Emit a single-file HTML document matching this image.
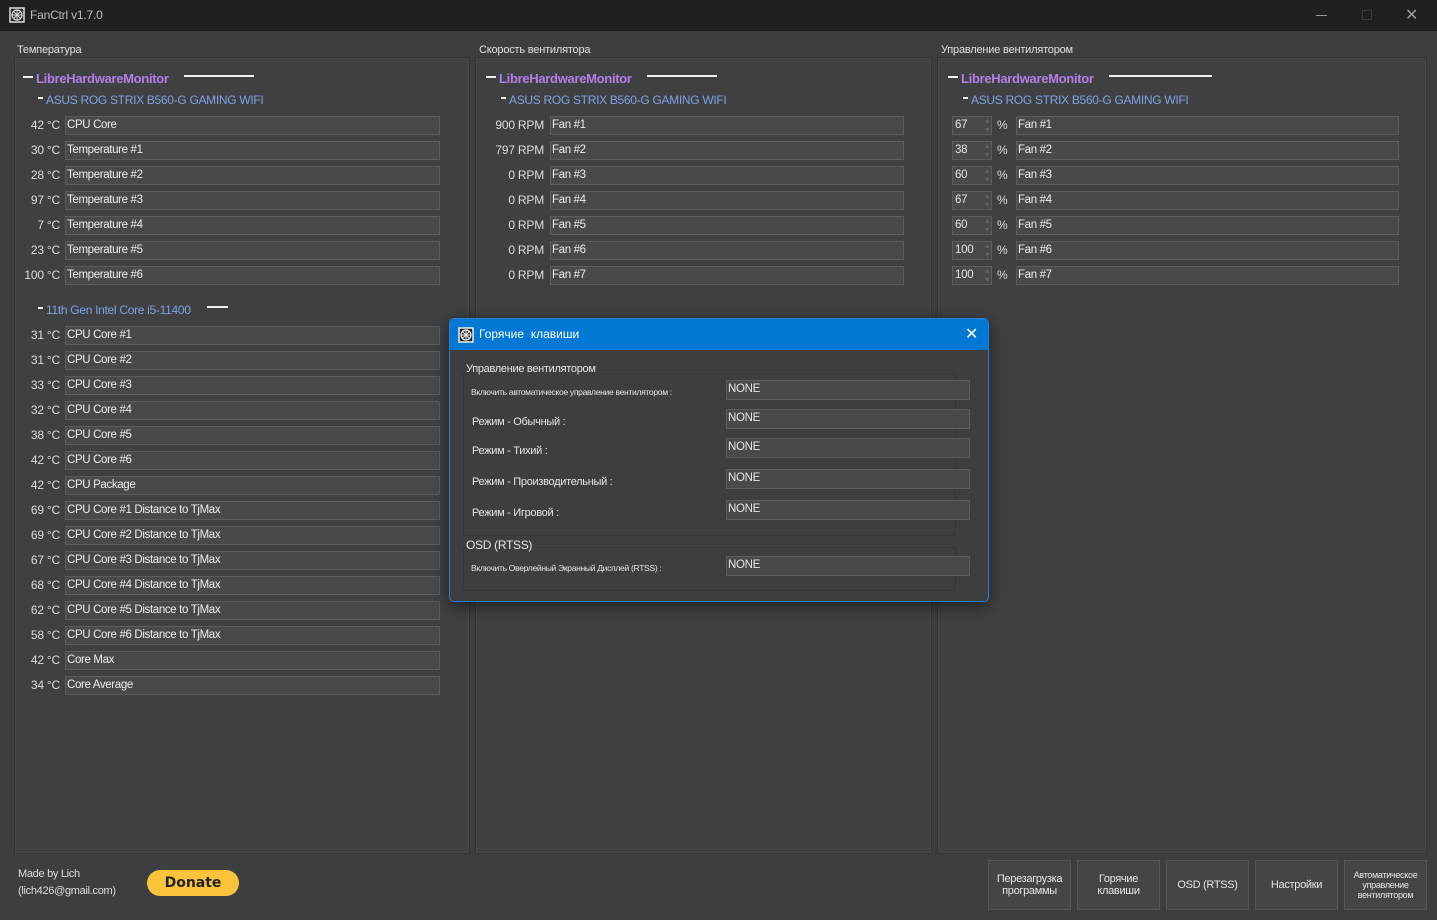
<!DOCTYPE html>
<html><head><meta charset="utf-8"><style>
*{margin:0;padding:0;box-sizing:border-box}
body{width:1437px;height:920px;background:#3d3e40;font-family:"Liberation Sans","Noto Sans CJK SC",sans-serif;color:#e6e6e6;font-size:12px;position:relative;overflow:hidden}
.a{position:absolute;white-space:nowrap}
.tb{left:0;top:0;width:1437px;height:31px;background:#202020}
.pn{border:1px solid #333436;background:#3f4042;box-shadow:inset 0 0 0 1px #46474a}
.lbl{font-size:11px;color:#e0e0e0;letter-spacing:-.2px}
.lhm{font-weight:bold;color:#b57ee8;font-size:13px;letter-spacing:-.3px}
.dev{color:#7fa2e0;font-size:12px;letter-spacing:-.3px}
.ln{height:2px;background:#f0f0f0}
.b{height:19px;border:1px solid #5c5d60;background:#48494b;padding-left:1px;line-height:17px;font-size:11.5px;letter-spacing:-.35px;color:#eee}
.v{text-align:right;font-size:12px;color:#ddd;line-height:19px;letter-spacing:-.2px}
.sp{width:40px;height:19px;border:1px solid #5c5d60;background:#48494b;line-height:17px;padding-left:2px;font-size:11.5px;letter-spacing:-.3px}
.sp:after{content:"▴\A▾";white-space:pre;position:absolute;right:2px;top:-1px;font-size:8px;line-height:9px;color:#666}
.btn{top:860px;height:50px;border:1px solid #555659;background:#444547;font-size:11px;letter-spacing:-.3px;text-align:center;display:flex;align-items:center;justify-content:center;line-height:12px;color:#e6e6e6}
.dlg{left:449px;top:318px;width:540px;height:284px;background:#3d3e40;border:1px solid #2a7fd0;box-shadow:0 4px 16px rgba(0,0,0,.5);border-radius:5px;overflow:hidden}
.dt{left:0;top:0;width:540px;height:31px;background:#0078d4}
.db{height:20px;border:1px solid #5c5d60;background:#48494b;padding-left:1px;line-height:17px;font-size:11.5px;letter-spacing:-.3px}
.dl{font-size:11px;letter-spacing:-.3px}
.ds{font-size:8.5px;letter-spacing:-.3px}
</style></head><body>
<div class="a tb"></div>
<svg class="a" style="left:9px;top:7px" width="16" height="16" viewBox="0 0 16 16"><rect x="1" y="1" width="14" height="14" fill="none" stroke="#ddd" stroke-width="1.5"/><circle cx="8" cy="8" r="5" fill="none" stroke="#ddd" stroke-width="1.2"/><path d="M8 3v10M3 8h10M4.5 4.5l7 7M11.5 4.5l-7 7" stroke="#ddd" stroke-width="1"/></svg>
<div class="a" style="left:30px;top:8px;font-size:12px;color:#bbb;letter-spacing:-.2px">FanCtrl v1.7.0</div>
<div class="a" style="left:1316px;top:15px;width:11px;height:1px;background:#999"></div>
<div class="a" style="left:1362px;top:10px;width:10px;height:10px;border:1px solid #3a3a3a"></div>
<div class="a" style="left:1405px;top:5px;font-size:16px;color:#999">✕</div>

<div class="a pn" style="left:14px;top:57px;width:456px;height:797px"></div>
<div class="a pn" style="left:475px;top:57px;width:457px;height:797px"></div>
<div class="a pn" style="left:937px;top:57px;width:490px;height:797px"></div>
<div class="a lbl" style="left:17px;top:44px;background:#3d3e40;padding-right:4px">Температура</div>
<div class="a lbl" style="left:479px;top:44px;background:#3d3e40;padding-right:4px">Скорость вентилятора</div>
<div class="a lbl" style="left:941px;top:44px;background:#3d3e40;padding-right:4px">Управление вентилятором</div>

<div class="a ln" style="left:23px;top:76px;width:10px"></div><div class="a lhm" style="left:36px;top:71px">LibreHardwareMonitor</div><div class="a ln" style="left:184px;top:75px;width:70px"></div>
<div class="a ln" style="left:38px;top:97px;width:5px"></div><div class="a dev" style="left:46px;top:93px">ASUS ROG STRIX B560-G GAMING WIFI</div>
<div class="a ln" style="left:486px;top:76px;width:10px"></div><div class="a lhm" style="left:499px;top:71px">LibreHardwareMonitor</div><div class="a ln" style="left:647px;top:75px;width:70px"></div>
<div class="a ln" style="left:501px;top:97px;width:5px"></div><div class="a dev" style="left:509px;top:93px">ASUS ROG STRIX B560-G GAMING WIFI</div>
<div class="a ln" style="left:948px;top:76px;width:10px"></div><div class="a lhm" style="left:961px;top:71px">LibreHardwareMonitor</div><div class="a ln" style="left:1109px;top:75px;width:103px"></div>
<div class="a ln" style="left:963px;top:97px;width:5px"></div><div class="a dev" style="left:971px;top:93px">ASUS ROG STRIX B560-G GAMING WIFI</div>
<div class="a ln" style="left:38px;top:307px;width:5px"></div><div class="a dev" style="left:46px;top:303px">11th Gen Intel Core i5-11400</div><div class="a ln" style="left:207px;top:306px;width:21px"></div>

<div class="a v" style="left:16px;top:116px;width:44px">42 °C</div><div class="a b" style="left:65px;top:116px;width:375px">CPU Core</div>
<div class="a v" style="left:16px;top:141px;width:44px">30 °C</div><div class="a b" style="left:65px;top:141px;width:375px">Temperature #1</div>
<div class="a v" style="left:16px;top:166px;width:44px">28 °C</div><div class="a b" style="left:65px;top:166px;width:375px">Temperature #2</div>
<div class="a v" style="left:16px;top:191px;width:44px">97 °C</div><div class="a b" style="left:65px;top:191px;width:375px">Temperature #3</div>
<div class="a v" style="left:16px;top:216px;width:44px">7 °C</div><div class="a b" style="left:65px;top:216px;width:375px">Temperature #4</div>
<div class="a v" style="left:16px;top:241px;width:44px">23 °C</div><div class="a b" style="left:65px;top:241px;width:375px">Temperature #5</div>
<div class="a v" style="left:16px;top:266px;width:44px">100 °C</div><div class="a b" style="left:65px;top:266px;width:375px">Temperature #6</div>
<div class="a v" style="left:16px;top:326px;width:44px">31 °C</div><div class="a b" style="left:65px;top:326px;width:375px">CPU Core #1</div>
<div class="a v" style="left:16px;top:351px;width:44px">31 °C</div><div class="a b" style="left:65px;top:351px;width:375px">CPU Core #2</div>
<div class="a v" style="left:16px;top:376px;width:44px">33 °C</div><div class="a b" style="left:65px;top:376px;width:375px">CPU Core #3</div>
<div class="a v" style="left:16px;top:401px;width:44px">32 °C</div><div class="a b" style="left:65px;top:401px;width:375px">CPU Core #4</div>
<div class="a v" style="left:16px;top:426px;width:44px">38 °C</div><div class="a b" style="left:65px;top:426px;width:375px">CPU Core #5</div>
<div class="a v" style="left:16px;top:451px;width:44px">42 °C</div><div class="a b" style="left:65px;top:451px;width:375px">CPU Core #6</div>
<div class="a v" style="left:16px;top:476px;width:44px">42 °C</div><div class="a b" style="left:65px;top:476px;width:375px">CPU Package</div>
<div class="a v" style="left:16px;top:501px;width:44px">69 °C</div><div class="a b" style="left:65px;top:501px;width:375px">CPU Core #1 Distance to TjMax</div>
<div class="a v" style="left:16px;top:526px;width:44px">69 °C</div><div class="a b" style="left:65px;top:526px;width:375px">CPU Core #2 Distance to TjMax</div>
<div class="a v" style="left:16px;top:551px;width:44px">67 °C</div><div class="a b" style="left:65px;top:551px;width:375px">CPU Core #3 Distance to TjMax</div>
<div class="a v" style="left:16px;top:576px;width:44px">68 °C</div><div class="a b" style="left:65px;top:576px;width:375px">CPU Core #4 Distance to TjMax</div>
<div class="a v" style="left:16px;top:601px;width:44px">62 °C</div><div class="a b" style="left:65px;top:601px;width:375px">CPU Core #5 Distance to TjMax</div>
<div class="a v" style="left:16px;top:626px;width:44px">58 °C</div><div class="a b" style="left:65px;top:626px;width:375px">CPU Core #6 Distance to TjMax</div>
<div class="a v" style="left:16px;top:651px;width:44px">42 °C</div><div class="a b" style="left:65px;top:651px;width:375px">Core Max</div>
<div class="a v" style="left:16px;top:676px;width:44px">34 °C</div><div class="a b" style="left:65px;top:676px;width:375px">Core Average</div>

<div class="a v" style="left:480px;top:116px;width:64px">900 RPM</div><div class="a b" style="left:550px;top:116px;width:354px">Fan #1</div>
<div class="a v" style="left:480px;top:141px;width:64px">797 RPM</div><div class="a b" style="left:550px;top:141px;width:354px">Fan #2</div>
<div class="a v" style="left:480px;top:166px;width:64px">0 RPM</div><div class="a b" style="left:550px;top:166px;width:354px">Fan #3</div>
<div class="a v" style="left:480px;top:191px;width:64px">0 RPM</div><div class="a b" style="left:550px;top:191px;width:354px">Fan #4</div>
<div class="a v" style="left:480px;top:216px;width:64px">0 RPM</div><div class="a b" style="left:550px;top:216px;width:354px">Fan #5</div>
<div class="a v" style="left:480px;top:241px;width:64px">0 RPM</div><div class="a b" style="left:550px;top:241px;width:354px">Fan #6</div>
<div class="a v" style="left:480px;top:266px;width:64px">0 RPM</div><div class="a b" style="left:550px;top:266px;width:354px">Fan #7</div>

<div class="a sp" style="left:952px;top:116px">67</div><div class="a v" style="left:997px;top:116px">%</div><div class="a b" style="left:1016px;top:116px;width:383px">Fan #1</div>
<div class="a sp" style="left:952px;top:141px">38</div><div class="a v" style="left:997px;top:141px">%</div><div class="a b" style="left:1016px;top:141px;width:383px">Fan #2</div>
<div class="a sp" style="left:952px;top:166px">60</div><div class="a v" style="left:997px;top:166px">%</div><div class="a b" style="left:1016px;top:166px;width:383px">Fan #3</div>
<div class="a sp" style="left:952px;top:191px">67</div><div class="a v" style="left:997px;top:191px">%</div><div class="a b" style="left:1016px;top:191px;width:383px">Fan #4</div>
<div class="a sp" style="left:952px;top:216px">60</div><div class="a v" style="left:997px;top:216px">%</div><div class="a b" style="left:1016px;top:216px;width:383px">Fan #5</div>
<div class="a sp" style="left:952px;top:241px">100</div><div class="a v" style="left:997px;top:241px">%</div><div class="a b" style="left:1016px;top:241px;width:383px">Fan #6</div>
<div class="a sp" style="left:952px;top:266px">100</div><div class="a v" style="left:997px;top:266px">%</div><div class="a b" style="left:1016px;top:266px;width:383px">Fan #7</div>

<div class="a" style="left:18px;top:866px;font-size:11px;color:#ddd;line-height:17px;letter-spacing:-.3px">Made by Lich<br>(lich426@gmail.com)</div>
<div class="a" style="left:147px;top:870px;width:92px;height:26px;border-radius:13px;background:#fbc43a;color:#222;font-weight:bold;font-size:14px;text-align:center;line-height:26px;font-family:'DejaVu Sans',sans-serif">Donate</div>
<div class="a btn" style="left:988px;width:83px">Перезагрузка<br>программы</div>
<div class="a btn" style="left:1077px;width:83px">Горячие<br>клавиши</div>
<div class="a btn" style="left:1166px;width:83px">OSD (RTSS)</div>
<div class="a btn" style="left:1255px;width:83px">Настройки</div>
<div class="a btn" style="left:1344px;width:83px;font-size:9px;line-height:10px">Автоматическое<br>управление<br>вентилятором</div>

<div class="a dlg">
 <div class="a dt"></div>
 <svg class="a" style="left:8px;top:8px" width="16" height="16" viewBox="0 0 16 16"><rect x="1" y="1" width="14" height="14" fill="#222" stroke="#eee" stroke-width="1.5"/><circle cx="8" cy="8" r="5" fill="none" stroke="#eee" stroke-width="1.2"/><path d="M8 3v10M3 8h10M4.5 4.5l7 7M11.5 4.5l-7 7" stroke="#eee" stroke-width="1"/></svg>
 <div class="a" style="left:29px;top:8px;font-size:12px;color:#fff">Горячие&nbsp; клавиши</div>
 <div class="a" style="left:515px;top:5px;font-size:16px;color:#fff">✕</div>
 <div class="a" style="left:13px;top:54px;width:493px;height:163px;border:1px solid #353638"></div>
 <div class="a" style="left:13px;top:228px;width:493px;height:44px;border:1px solid #353638"></div>
 <div class="a dl" style="left:16px;top:44px;background:#3d3e40;padding-right:4px">Управление вентилятором</div>
 <div class="a ds" style="left:21px;top:68px">Включить автоматическое управление вентилятором :</div>
 <div class="a db" style="left:276px;top:61px;width:244px">NONE</div>
 <div class="a dl" style="left:22px;top:97px">Режим - Обычный :</div>
 <div class="a db" style="left:276px;top:90px;width:244px">NONE</div>
 <div class="a dl" style="left:22px;top:126px">Режим - Тихий :</div>
 <div class="a db" style="left:276px;top:119px;width:244px">NONE</div>
 <div class="a dl" style="left:22px;top:157px">Режим - Производительный :</div>
 <div class="a db" style="left:276px;top:150px;width:244px">NONE</div>
 <div class="a dl" style="left:22px;top:188px">Режим - Игровой :</div>
 <div class="a db" style="left:276px;top:181px;width:244px">NONE</div>
 <div class="a" style="left:16px;top:219px;font-size:12px;background:#3d3e40;padding-right:4px;letter-spacing:-.3px">OSD (RTSS)</div>
 <div class="a ds" style="left:21px;top:244px">Включить Оверлейный Экранный Дисплей (RTSS) :</div>
 <div class="a db" style="left:276px;top:237px;width:244px">NONE</div>
</div>
</body></html>
